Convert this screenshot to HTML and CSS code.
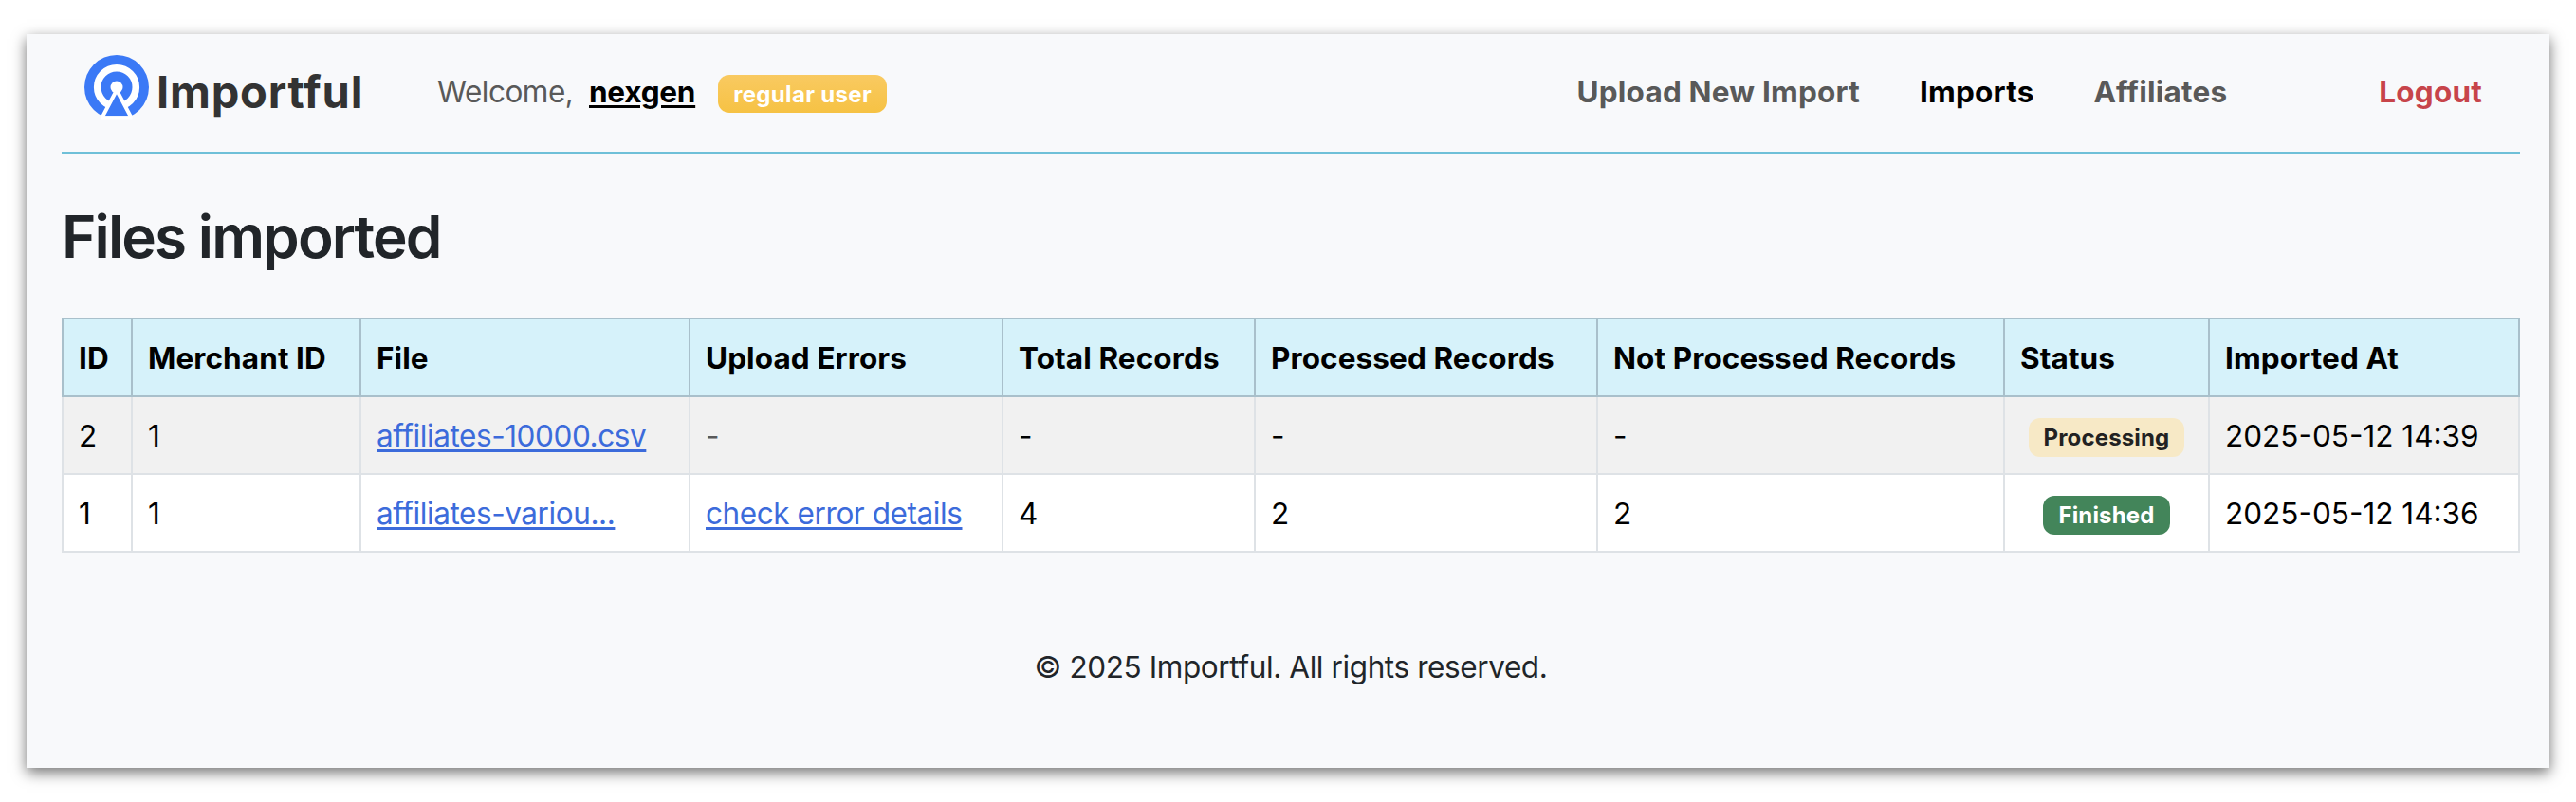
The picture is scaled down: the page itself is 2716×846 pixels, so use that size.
FILE: index.html
```html
<!DOCTYPE html>
<html lang="en">
<head>
<meta charset="utf-8">
<title>Importful</title>
<link rel="stylesheet" href="styles.css">
</head>
<body>
<div class="window">
  <header class="navbar">
    <a class="brand">
      <svg class="brand-icon" width="68" height="70" viewBox="0 0 68 70">
        <circle cx="34" cy="34" r="34" fill="#3b79f6"/>
        <circle cx="34" cy="34" r="20.3" fill="none" stroke="#fff" stroke-width="7.6"/>
        <path d="M34 37 L52 71 H16 Z" fill="#3b79f6" stroke="#fff" stroke-width="4"/>
        <circle cx="34" cy="34" r="6.5" fill="#fff"/>
        <path d="M12 64.3 H56 V72 H12 Z" fill="#f8f9fb"/>
        <path d="M17.5 64.3 H50.5 V68.5 H17.5 Z" fill="#fff"/>
      </svg>
      <span class="brand-name">Importful</span>
    </a>
    <div class="greeting">
      <span class="welcome">Welcome,</span>
      <a class="user">nexgen</a>
      <span class="badge badge-role">regular user</span>
    </div>
    <nav class="links">
      <a class="link upload">Upload New Import</a>
      <a class="link active">Imports</a>
      <a class="link affiliates">Affiliates</a>
      <a class="link logout">Logout</a>
    </nav>
  </header>
  <h1 class="title">Files imported</h1>
  <table class="imports">
    <colgroup><col class="c-id"><col class="c-merchant"><col class="c-file"><col class="c-errors"><col class="c-total"><col class="c-processed"><col class="c-not"><col class="c-status"><col class="c-date"></colgroup>
    <thead>
      <tr><th>ID</th><th>Merchant ID</th><th>File</th><th>Upload Errors</th><th>Total Records</th><th>Processed Records</th><th>Not Processed Records</th><th>Status</th><th>Imported At</th></tr>
    </thead>
    <tbody>
      <tr><td>2</td><td>1</td><td><a>affiliates-10000.csv</a></td><td class="muted">-</td><td>-</td><td>-</td><td>-</td><td class="status"><span class="badge badge-processing">Processing</span></td><td>2025-05-12 14:39</td></tr>
      <tr><td>1</td><td>1</td><td><a>affiliates-variou...</a></td><td><a>check error details</a></td><td>4</td><td>2</td><td>2</td><td class="status"><span class="badge badge-finished">Finished</span></td><td>2025-05-12 14:36</td></tr>
    </tbody>
  </table>
  <footer class="footer">© 2025 Importful. All rights reserved.</footer>
</div>
</body>
</html>
```
FILE: styles.css
```css
* { box-sizing: border-box; }
body {
  margin: 0;
  padding: 36px 28px;
  background: #fff;
  color: #212529;
  font-family: Inter, "Liberation Sans", sans-serif;
  font-size: 31.5px;
  height: 846px;
  overflow: hidden;
}
.window {
  height: 774px;
  padding: 0 31px 0 37px;
  background: #f8f9fb;
  box-shadow: 0 5px 14px rgba(0, 0, 0, .55);
}
.navbar {
  display: flex;
  align-items: center;
  height: 126px;
  padding: 0 40px 3px 24px;
  border-bottom: 2px solid #6fc0d8;
}
.brand { display: flex; align-items: center; gap: 8px; height: 70px; margin-top: -7px; }
.brand-name {
  width: 220px;
  color: #333;
  font-size: 47px;
  font-weight: 650;
  letter-spacing: .8px;
  padding-top: 6px;
}
.greeting { display: flex; align-items: center; margin-left: 76px; }
.welcome { width: 142px; color: #595959; letter-spacing: -.5px; }
.user {
  margin-left: 18px;
  color: #000;
  font-weight: 700;
  letter-spacing: -.25px;
  text-decoration: underline;
  text-decoration-thickness: 3px;
  text-underline-offset: 3px;
}
.badge {
  display: inline-block;
  padding: 0 16px;
  height: 41px;
  border-radius: 12px;
  font-size: 24px;
  font-weight: 700;
  letter-spacing: .15px;
  line-height: 41px;
}
.badge-role {
  height: 40px;
  margin: 4px 0 0 24px;
  background: linear-gradient(#f9ca61, #f6c244);
  color: #fff;
  letter-spacing: .33px;
  line-height: 41px;
}
.links { display: flex; margin-left: auto; font-weight: 700; letter-spacing: .2px; }
.link { color: #595959; }
.active { margin-left: 63px; color: #000; }
.affiliates { margin-left: 63px; }
.logout { margin-left: 160px; color: #c7444a; }
.title {
  margin: 49px 0 0;
  font-size: 62px;
  font-weight: 600;
  letter-spacing: -1.9px;
  line-height: 78px;
}
.imports {
  width: 2592px;
  margin-top: 46px;
  border-collapse: collapse;
  table-layout: fixed;
  color: #000;
}
.c-id { width: 73px; }
.c-merchant { width: 241px; }
.c-file { width: 347px; }
.c-errors { width: 330px; }
.c-total { width: 266px; }
.c-processed { width: 361px; }
.c-not { width: 429px; }
.c-status { width: 216px; }
.c-date { width: 327px; }
th, td {
  height: 82px;
  padding: 2px 0 0 16px;
  border: 2px solid #dee2e6;
  background: #fff;
  text-align: left;
  line-height: 46px;
  white-space: nowrap;
}
th { background: #d6f2fa; border-color: #a9c0cb; font-weight: 700; letter-spacing: .1px; }
tbody tr:first-child td { background: #f1f1f1; }
td a {
  color: #3c6bdb;
  letter-spacing: -.42px;
  text-decoration: underline;
  text-decoration-thickness: 3px;
  text-underline-offset: 3px;
}
td.muted { color: #595959; }
td.status { padding: 0; text-align: center; }
.badge-processing { background: #f7e9c6; color: #222; }
.badge-finished { background: #43855a; color: #fff; }
.footer { margin-top: 98px; text-align: center; line-height: 46px; letter-spacing: -.4px; }
```
